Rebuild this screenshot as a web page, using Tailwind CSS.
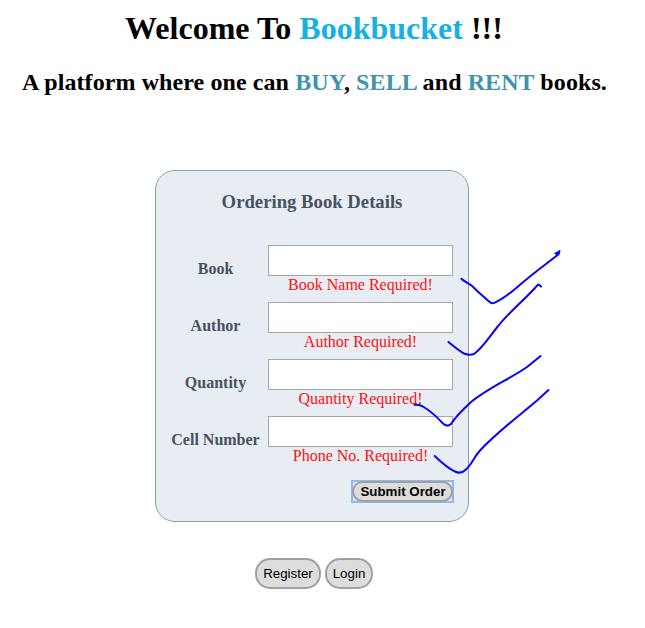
<!DOCTYPE html>
<html lang="en">
<head>
<meta charset="utf-8">
<title>Bookbucket</title>
<script src="https://cdn.jsdelivr.net/npm/@tailwindcss/browser@4"></script>
</head>
<body class="relative h-[628px] w-[645px] overflow-hidden bg-white font-['Liberation_Serif',serif] text-black">
<main class="flex w-[629px] flex-col items-center">
  <h1 class="mt-[10px] mr-px text-[32px] leading-[37px] font-bold whitespace-nowrap">Welcome To <span class="text-[#17b1df]">Bookbucket</span> !!!</h1>
  <h2 class="mt-[21px] text-[24px] leading-[28px] font-bold tracking-[0.09px] whitespace-nowrap">A platform where one can <span class="text-[#3f94ad]">BUY</span>, <span class="text-[#3f94ad]">SELL</span> and <span class="text-[#3f94ad]">RENT</span> books.</h2>
  <form class="mt-[74px] mr-[5px] flex h-[352px] w-[314px] flex-col rounded-[20px] border border-[#969ca3] bg-[#e8edf4] pr-[15px] pl-[14px] text-base">
    <h3 class="mt-[20px] ml-px text-center text-[18.72px] leading-[21px] font-bold text-[#465360]">Ordering Book Details</h3>
    <div class="mt-[33px] grid grid-cols-[91px_185px] gap-x-[7px]">
      <label for="book" class="mt-[15px] text-center leading-[18px] font-bold text-[#465360]">Book</label>
      <div class="flex h-[57px] flex-col text-center"><input id="book" class="h-[31px] w-full border border-[#a6a6a6] bg-white"><span class="leading-[18px] text-[#ff0f0f]">Book Name Required!</span></div>
      <label for="author" class="mt-[15px] text-center leading-[18px] font-bold text-[#465360]">Author</label>
      <div class="flex h-[57px] flex-col text-center"><input id="author" class="h-[31px] w-full border border-[#a6a6a6] bg-white"><span class="leading-[18px] text-[#ff0f0f]">Author Required!</span></div>
      <label for="qty" class="mt-[15px] text-center leading-[18px] font-bold text-[#465360]">Quantity</label>
      <div class="flex h-[57px] flex-col text-center"><input id="qty" class="h-[31px] w-full border border-[#a6a6a6] bg-white"><span class="leading-[18px] text-[#ff0f0f]">Quantity Required!</span></div>
      <label for="cell" class="mt-[15px] text-center leading-[18px] font-bold whitespace-nowrap text-[#465360]">Cell Number</label>
      <div class="flex h-[57px] flex-col text-center"><input id="cell" class="h-[31px] w-full border border-[#a6a6a6] bg-white"><span class="leading-[18px] text-[#ff0f0f]">Phone No. Required!</span></div>
    </div>
    <div class="mt-[7px] mr-[-1px] flex h-[23px] w-[103px] self-end border-2 border-[#8fb8f6] bg-[#e8edf4]">
      <button type="button" class="m-[-1px] h-[21px] w-[101px] shrink-0 rounded-[11px] border-2 border-[#a0a0a0] bg-[#dddddd] pl-px text-center font-['Liberation_Sans',Arial,sans-serif] text-[13.333px] leading-[17px] font-bold whitespace-nowrap">Submit Order</button>
    </div>
  </form>
  <nav class="mt-[36px] mr-px flex gap-[4px] font-['Liberation_Sans',Arial,sans-serif] text-[13.333px]">
    <button type="button" class="h-[31px] w-[66px] rounded-[15px] border-2 border-[#a0a0a0] bg-[#dddddd] leading-[27px]">Register</button>
    <button type="button" class="h-[31px] w-[48px] rounded-[15px] border-2 border-[#a0a0a0] bg-[#dddddd] leading-[27px]">Login</button>
  </nav>
</main>
<!-- Hand-drawn ticks over the form -->
<svg class="pointer-events-none absolute inset-0" width="645" height="628" viewBox="0 0 645 628" fill="none" stroke="#0505fa" stroke-width="2" stroke-linecap="round" stroke-linejoin="round">
  <path d="M461.500 278.800 C464 281.500 468 283 471.500 285.500 C475 288.500 477 291 480 293.500 L489 301.500 Q492 304.500 495 302.500 C503 299 510 293.500 518 286.500 C531 275 544 265.500 557 255.500 L559.500 251 L558.500 254.500 L555.500 253.500 L559 252"/>
  <path d="M448.500 342 C454 346.500 459 351 464 353.500 Q469 355.500 474 354 C483 348 492 333 499 325 C509 312.500 523 301 535 288 Q538 284 539 284.700 L541 286.500"/>
  <path d="M414.500 404.700 Q419 404.500 422 406 C430 410.500 437 417 443 423.500 Q447 427.500 451 424 C456 416 463 409.500 470 403 C486 389 510 379 527 367 Q534 361.500 540.500 356"/>
  <path d="M434.700 456 C441 462 449 469 455 471.500 Q461 474.500 466 469.500 C472 464 474 457 480 450.500 C497 432 519 416 537 400.500 Q543 395 548.500 390"/>
</svg>
</body>
</html>
